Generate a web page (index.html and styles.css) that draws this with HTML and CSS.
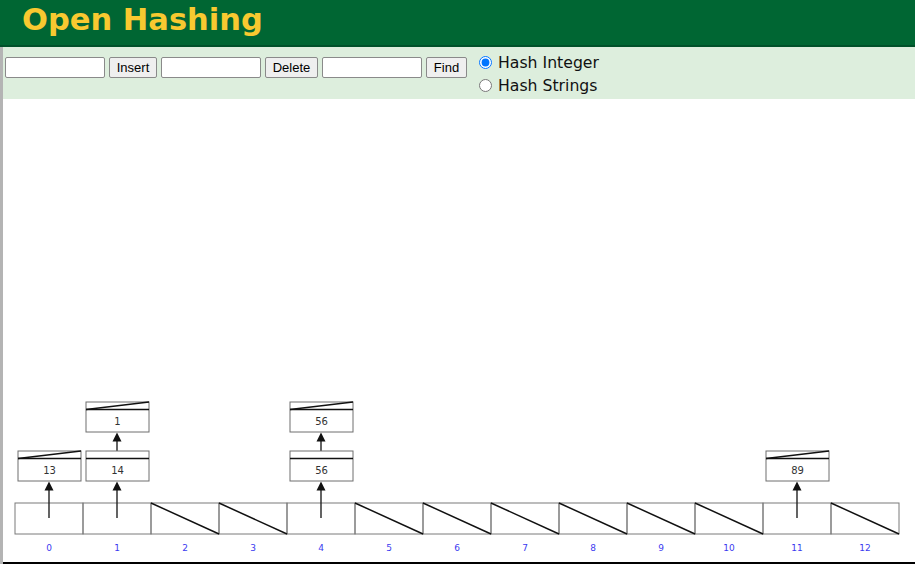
FILE: index.html
```html
<!DOCTYPE html>
<html lang="en">
<head>
    <meta charset="UTF-8">
    <title>Open Hashing</title>
    <link rel="stylesheet" href="styles.css">
</head>
<body>
    <div class="header">
        <h1 class="title">Open Hashing</h1>
    </div>
    <div class="page">
        <div class="controls">
            <input type="text" class="field">
            <button class="btn btn-insert">Insert</button>
            <input type="text" class="field">
            <button class="btn btn-delete">Delete</button>
            <input type="text" class="field">
            <button class="btn btn-find">Find</button>
            <div class="modes">
                <label class="mode"><input type="radio" name="mode" checked> Hash Integer</label>
                <label class="mode"><input type="radio" name="mode"> Hash Strings</label>
            </div>
        </div>
        <svg class="canvas" viewBox="3 99 912 463" width="912" height="463">
            <!-- buckets -->
            <g class="buckets">
                <rect x="15" y="503" width="68" height="31"/>
                <rect x="83" y="503" width="68" height="31"/>
                <rect x="151" y="503" width="68" height="31"/>
                <rect x="219" y="503" width="68" height="31"/>
                <rect x="287" y="503" width="68" height="31"/>
                <rect x="355" y="503" width="68" height="31"/>
                <rect x="423" y="503" width="68" height="31"/>
                <rect x="491" y="503" width="68" height="31"/>
                <rect x="559" y="503" width="68" height="31"/>
                <rect x="627" y="503" width="68" height="31"/>
                <rect x="695" y="503" width="68" height="31"/>
                <rect x="763" y="503" width="68" height="31"/>
                <rect x="831" y="503" width="68" height="31"/>
            </g>
            <g class="nulls">
                <line x1="151" y1="503" x2="219" y2="534"/>
                <line x1="219" y1="503" x2="287" y2="534"/>
                <line x1="355" y1="503" x2="423" y2="534"/>
                <line x1="423" y1="503" x2="491" y2="534"/>
                <line x1="491" y1="503" x2="559" y2="534"/>
                <line x1="559" y1="503" x2="627" y2="534"/>
                <line x1="627" y1="503" x2="695" y2="534"/>
                <line x1="695" y1="503" x2="763" y2="534"/>
                <line x1="831" y1="503" x2="899" y2="534"/>
            </g>
            <g class="labels">
                <text x="49" y="551">0</text>
                <text x="117" y="551">1</text>
                <text x="185" y="551">2</text>
                <text x="253" y="551">3</text>
                <text x="321" y="551">4</text>
                <text x="389" y="551">5</text>
                <text x="457" y="551">6</text>
                <text x="525" y="551">7</text>
                <text x="593" y="551">8</text>
                <text x="661" y="551">9</text>
                <text x="729" y="551">10</text>
                <text x="797" y="551">11</text>
                <text x="865" y="551">12</text>
            </g>

            <!-- arrows: shaft + head -->
            <g class="arrows">
                <line x1="49" y1="518" x2="49" y2="489"/>
                <polygon points="49,481.5 44.5,490.5 53.5,490.5"/>
                <line x1="117" y1="518" x2="117" y2="489"/>
                <polygon points="117,481.5 112.5,490.5 121.5,490.5"/>
                <line x1="117" y1="451" x2="117" y2="440"/>
                <polygon points="117,432.5 112.5,441.5 121.5,441.5"/>
                <line x1="321" y1="518" x2="321" y2="489"/>
                <polygon points="321,481.5 316.5,490.5 325.5,490.5"/>
                <line x1="321" y1="451" x2="321" y2="440"/>
                <polygon points="321,432.5 316.5,441.5 325.5,441.5"/>
                <line x1="797" y1="518" x2="797" y2="489"/>
                <polygon points="797,481.5 792.5,490.5 801.5,490.5"/>
            </g>

            <!-- chain nodes -->
            <g class="node">
                <rect x="18" y="451" width="63" height="30"/>
                <line class="sep" x1="18" y1="458.5" x2="81" y2="458.5"/>
                <line class="sep" x1="18" y1="458.5" x2="81" y2="451"/>
                <text x="49.5" y="474">13</text>
            </g>
            <g class="node">
                <rect x="86" y="451" width="63" height="30"/>
                <line class="sep" x1="86" y1="458.5" x2="149" y2="458.5"/>
                <text x="117.5" y="474">14</text>
            </g>
            <g class="node">
                <rect x="86" y="402" width="63" height="30"/>
                <line class="sep" x1="86" y1="409.5" x2="149" y2="409.5"/>
                <line class="sep" x1="86" y1="409.5" x2="149" y2="402"/>
                <text x="117.5" y="425">1</text>
            </g>
            <g class="node">
                <rect x="290" y="451" width="63" height="30"/>
                <line class="sep" x1="290" y1="458.5" x2="353" y2="458.5"/>
                <text x="321.5" y="474">56</text>
            </g>
            <g class="node">
                <rect x="290" y="402" width="63" height="30"/>
                <line class="sep" x1="290" y1="409.5" x2="353" y2="409.5"/>
                <line class="sep" x1="290" y1="409.5" x2="353" y2="402"/>
                <text x="321.5" y="425">56</text>
            </g>
            <g class="node">
                <rect x="766" y="451" width="63" height="30"/>
                <line class="sep" x1="766" y1="458.5" x2="829" y2="458.5"/>
                <line class="sep" x1="766" y1="458.5" x2="829" y2="451"/>
                <text x="797.5" y="474">89</text>
            </g>
        </svg>
    </div>
</body>
</html>
```

FILE: styles.css
```css
body {
    margin: 0;
    font-family: "DejaVu Sans", Verdana, sans-serif;
    background-color: #fff;
    overflow: hidden;
}

.header {
    background-color: #006633;
    height: 45px;
    border-bottom: 2px solid #00512a;
}
.title {
    margin: 0;
    padding-left: 22px;
    font-size: 30.5px;
    line-height: 40px;
    font-weight: bold;
    color: #f8c930;
}

.page {
    border-left: 3px solid #b4b4b4;
}

.controls {
    display: flex;
    align-items: flex-start;
    gap: 4px;
    height: 52px;
    box-sizing: border-box;
    padding: 4px 0 0 2px;
    background-color: #ddeedd;
}
.field {
    width: 100px;
    height: 21px;
    box-sizing: border-box;
    margin: 6px 0 0 0;
    border: 1px solid #8a8a8a;
    border-radius: 2px;
    background: #fff;
}
.btn {
    height: 21px;
    box-sizing: border-box;
    margin: 6px 0 0 0;
    padding: 0 6px;
    font-family: "Liberation Sans", Arial, sans-serif;
    font-size: 13px;
    color: #000;
    background-color: #efefef;
    border: 1px solid #8a8a8a;
    border-radius: 2px;
}
.btn-insert { width: 48px; }
.btn-delete { width: 53px; }
.btn-find { width: 41px; }

.modes {
    display: flex;
    flex-direction: column;
    margin-left: 4px;
}
.mode {
    display: flex;
    align-items: center;
    font-size: 15.7px;
    line-height: 23px;
    color: #111;
}
.mode input {
    width: 13px;
    height: 13px;
    margin: 0 6px 0 4px;
}

.canvas {
    display: block;
    border-bottom: 2px solid #000;
}
.buckets rect {
    fill: none;
    stroke: #7a7a7a;
    stroke-width: 1;
}
.nulls line {
    stroke: #111;
    stroke-width: 1.5;
}
.labels text {
    font-family: "DejaVu Sans", Verdana, sans-serif;
    font-size: 9px;
    fill: #3b3bf0;
    text-anchor: middle;
}
.arrows line {
    stroke: #222;
    stroke-width: 1.4;
}
.arrows polygon {
    fill: #111;
}
.node rect {
    fill: #fff;
    stroke: #6e6e6e;
    stroke-width: 1;
}
.node .sep {
    stroke: #111;
    stroke-width: 1.5;
}
.node text {
    font-family: "DejaVu Sans", Verdana, sans-serif;
    font-size: 10px;
    fill: #333;
    text-anchor: middle;
}
```
